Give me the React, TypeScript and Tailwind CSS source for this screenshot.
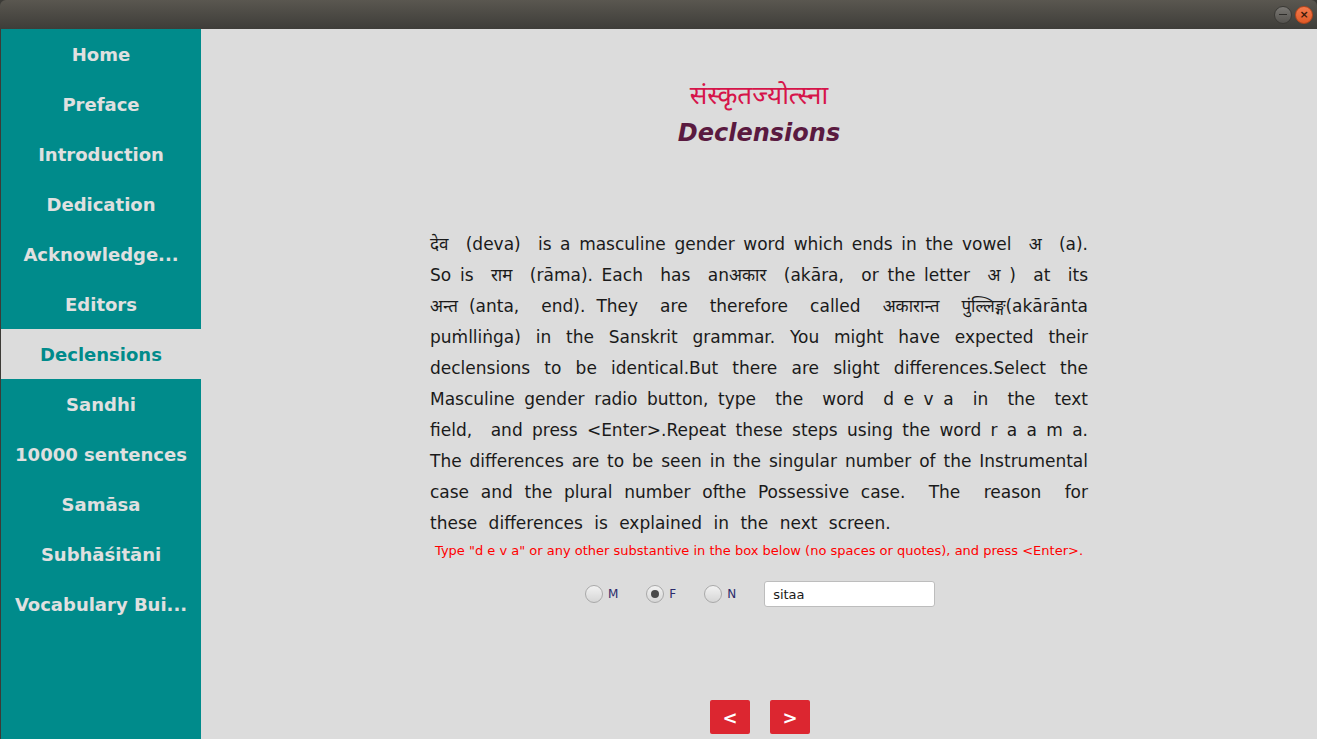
import React from 'react';

const navItems = [
  'Home',
  'Preface',
  'Introduction',
  'Dedication',
  'Acknowledge...',
  'Editors',
  'Declensions',
  'Sandhi',
  '10000 sentences',
  'Samāsa',
  'Subhāśitāni',
  'Vocabulary Bui...',
];

const lines = [
  'देव  (deva)  is a masculine gender word which ends in the vowel  अ  (a).',
  'So is  राम  (rāma). Each  has  anअकार  (akāra,  or the letter  अ )  at  its',
  'अन्त (anta,  end). They  are  therefore  called  अकारान्त  पुंल्लिङ्ग(akārānta',
  'puṁlliṅga) in the Sanskrit grammar. You might have expected their',
  'declensions to be identical.But there are slight differences.Select the',
  'Masculine gender radio button, type  the  word  d e v a  in  the  text',
  'field,  and press <Enter>.Repeat these steps using the word r a a m a.',
  'The differences are to be seen in the singular number of the Instrumental',
  'case and the plural number ofthe Possessive case.  The  reason  for',
];

const font = { fontFamily: '"DejaVu Sans", "Noto Sans", sans-serif' };

function Radio({ label, checked }: { label: string; checked?: boolean }) {
  return (
    <label className="flex items-center gap-[5px] text-[12px] text-[#2b2b6b]">
      <span className="w-[18px] h-[18px] rounded-full border border-[#a9a9a9] bg-gradient-to-b from-[#f2f2f2] to-[#d6d6d6] flex items-center justify-center">
        {checked && <span className="w-[8px] h-[8px] rounded-full bg-[#4a4a4a]" />}
      </span>
      {label}
    </label>
  );
}

export default function App() {
  return (
    <div className="w-[1317px] h-[739px] flex flex-col overflow-hidden bg-[#3c3b37]" style={font}>
      {/* Title bar */}
      <div className="h-[29px] shrink-0 rounded-t-[6px] bg-gradient-to-b from-[#5a5750] to-[#3e3d39] flex items-center justify-end gap-[3px] pr-[4px]">
        <span className="w-[18px] h-[18px] rounded-full bg-gradient-to-b from-[#7a7874] to-[#55534f] border border-[#3a3935] flex items-center justify-center">
          <span className="w-[8px] h-[1.5px] bg-[#2e2d2a]" />
        </span>
        <span className="w-[18px] h-[18px] rounded-full bg-gradient-to-b from-[#f47a4c] to-[#e05a26] border border-[#b6451b] flex items-center justify-center text-[#3a1a0a] text-[11px] leading-none font-bold">
          ×
        </span>
      </div>

      <div className="flex flex-1 min-h-0 pl-[1px]">
        {/* Sidebar */}
        <nav className="w-[200px] shrink-0 bg-[#008b8b] flex flex-col">
          {navItems.map((item) => {
            const active = item === 'Declensions';
            return (
              <div
                key={item}
                className={`h-[50px] flex items-center justify-center text-[18px] font-bold ${
                  active ? 'bg-[#dcdcdc] text-[#008b8b]' : 'text-[#e0e0e0]'
                }`}
              >
                {item}
              </div>
            );
          })}
        </nav>

        {/* Main */}
        <main className="flex-1 bg-[#dcdcdc] flex flex-col items-center">
          <div className="mt-[48px] text-[26px] text-[#d6144a] leading-[36px]">संस्कृतज्योत्स्ना</div>
          <div className="mt-[3px] text-[24px] font-bold italic text-[#5a1a40] leading-[34px]">Declensions</div>

          <div className="mt-[79px] w-[658px] text-[17px] text-[#1a1a1a] leading-[31px]">
            {lines.map((l, i) => (
              <div key={i} className="whitespace-pre text-justify [text-align-last:justify]">
                {l}
              </div>
            ))}
            <div className="whitespace-pre [word-spacing:6px]">these differences is explained in the next screen.</div>
          </div>

          <div className="mt-[3px] text-[13px] text-[#ff0000] leading-[18px]">
            Type "d e v a" or any other substantive in the box below (no spaces or quotes), and press &lt;Enter&gt;.
          </div>

          <div className="mt-[21px] ml-[2px] flex items-center gap-[28px]">
            <Radio label="M" />
            <Radio label="F" checked />
            <Radio label="N" />
            <input
              defaultValue="sitaa"
              className="w-[171px] h-[26px] bg-white border border-[#bdbdbd] rounded-[3px] px-[8px] text-[13px] text-[#1a1a1a] outline-none"
              style={font}
            />
          </div>

          <div className="mt-auto mb-[5px] ml-[2px] flex gap-[20px]">
            <button className="w-[40px] h-[34px] rounded-[2px] bg-[#dc2630] text-white text-[18px] font-bold">&lt;</button>
            <button className="w-[40px] h-[34px] rounded-[2px] bg-[#dc2630] text-white text-[18px] font-bold">&gt;</button>
          </div>
        </main>
      </div>
    </div>
  );
}
